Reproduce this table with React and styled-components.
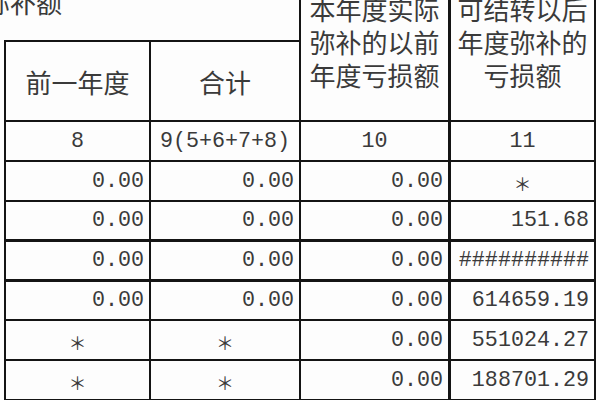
import React from 'react';
import styled, { createGlobalStyle } from 'styled-components';

const GlobalStyle = createGlobalStyle`
  html, body {
    margin: 0;
    padding: 0;
    background: #ffffff;
  }
`;

const Sheet = styled.div`
  width: 600px;
  height: 400px;
  overflow: hidden;
  background: #fdfdfd;
`;

const Grid = styled.div`
  display: grid;
  grid-template-columns: 147px 150px 150px 145px;
  grid-template-rows: 80px 80px repeat(3, 40px) 40px 39px 40px 40px;
  margin: -38px 0 0 4px;
  color: #3a3a3a;
`;

const Cell = styled.div`
  box-sizing: border-box;
  display: flex;
  align-items: center;
  justify-content: ${(p) => (p.$align === 'right' ? 'flex-end' : 'center')};
  padding: 0 ${(p) => (p.$align === 'right' ? '5px' : '0')} 0 0;
  border-right: ${(p) => (p.$thickRight ? 3 : 2)}px solid #141414;
  border-bottom: ${(p) => (p.$thickBottom ? 3 : 2)}px solid #141414;
  border-left: ${(p) => (p.$first ? '2px solid #141414' : 'none')};
  font-family: 'Liberation Mono', 'Noto Sans CJK SC', monospace;
  font-size: 21.7px;
  white-space: nowrap;
  overflow: hidden;
`;

const Title = styled.div`
  grid-column: 1 / span 2;
  grid-row: 1;
  box-sizing: border-box;
  display: flex;
  align-items: center;
  border-right: 2px solid #141414;
  border-bottom: 2px solid #141414;
  font-family: 'Noto Sans CJK SC', sans-serif;
  font-size: 26px;
  text-indent: -20px;
  white-space: nowrap;
`;

const Head = styled.div`
  box-sizing: border-box;
  display: flex;
  align-items: center;
  justify-content: center;
  text-align: center;
  grid-column: ${(p) => p.$col || 'auto'};
  grid-row: ${(p) => (p.$col ? '1 / span 2' : '2')};
  border-right: ${(p) => (p.$thickRight ? 3 : 2)}px solid #141414;
  border-bottom: 2px solid #141414;
  border-left: ${(p) => (p.$first ? '2px solid #141414' : 'none')};
  font-family: 'Noto Sans CJK SC', sans-serif;
  font-size: 26px;
  line-height: 33px;
  padding: 0 4px;
`;

const Star = styled.span`
  font-family: 'Noto Sans CJK SC', sans-serif;
  font-size: 18px;
  padding-top: 4px;
`;

const rows = [
  { cells: ['0.00', '0.00', '0.00', '*'] },
  { cells: ['0.00', '0.00', '0.00', '151.68'], thick: true },
  { cells: ['0.00', '0.00', '0.00', '##########'], thick: true },
  { cells: ['0.00', '0.00', '0.00', '614659.19'] },
  { cells: ['*', '*', '0.00', '551024.27'] },
  { cells: ['*', '*', '0.00', '188701.29'] },
];

export default function App() {
  return (
    <Sheet>
      <GlobalStyle />
      <Grid>
        <Title>弥补额</Title>
        <Head $col={3} $thickRight>本年度实际弥补的以前年度亏损额</Head>
        <Head $col={4}>可结转以后年度弥补的亏损额</Head>

        <Head $first>前一年度</Head>
        <Head>合计</Head>

        <Cell $first>8</Cell>
        <Cell>9(5+6+7+8)</Cell>
        <Cell $thickRight>10</Cell>
        <Cell>11</Cell>

        {rows.map((row, i) =>
          row.cells.map((value, j) => {
            const isStar = value === '*';
            return (
              <Cell
                key={`${i}-${j}`}
                $first={j === 0}
                $thickRight={j === 2}
                $thickBottom={row.thick}
                $align={isStar ? 'center' : 'right'}
              >
                {isStar ? <Star>＊</Star> : value}
              </Cell>
            );
          })
        )}
      </Grid>
    </Sheet>
  );
}
